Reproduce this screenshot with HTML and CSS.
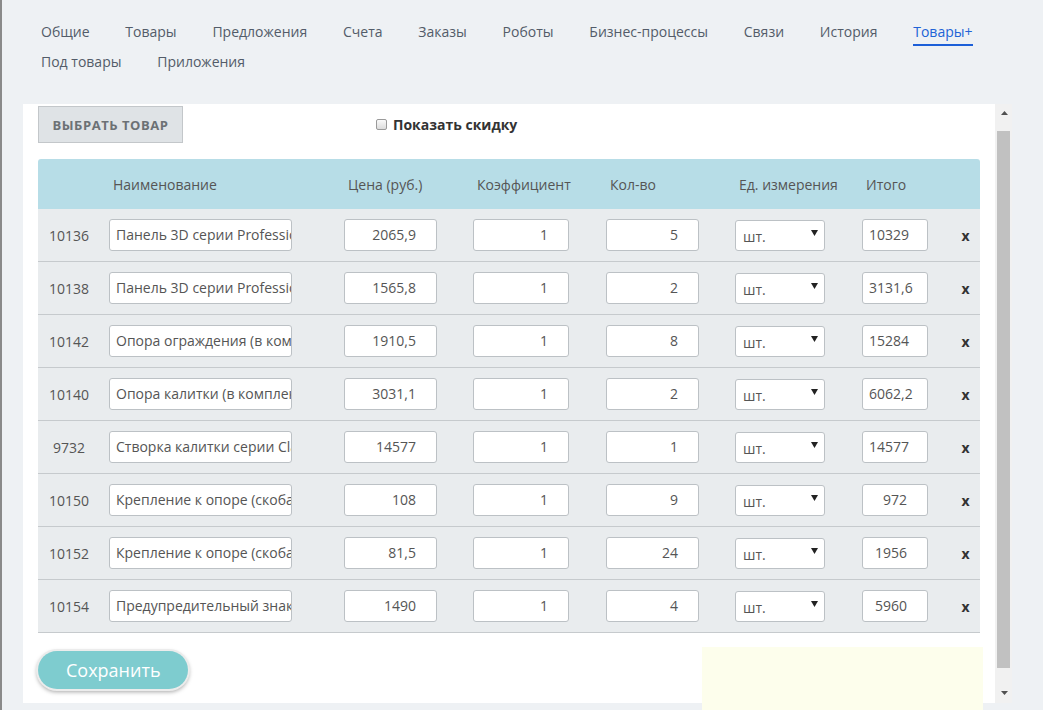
FILE: index.html
```html
<!DOCTYPE html>
<html lang="ru">
<head>
<meta charset="utf-8">
<title>Товары+</title>
<link rel="stylesheet" href="styles.css">
</head>
<body>
<div class="page">
  <nav class="tabs">
    <a class="tab">Общие</a>
    <a class="tab">Товары</a>
    <a class="tab">Предложения</a>
    <a class="tab">Счета</a>
    <a class="tab">Заказы</a>
    <a class="tab">Роботы</a>
    <a class="tab">Бизнес-процессы</a>
    <a class="tab">Связи</a>
    <a class="tab">История</a>
    <a class="tab active">Товары+</a>
    <a class="tab">Под товары</a>
    <a class="tab">Приложения</a>
  </nav>

  <div class="frame">
    <div class="content">
      <div class="toolbar">
        <button class="pick-btn">Выбрать товар</button>
        <label class="discount"><span class="checkbox"></span>Показать скидку</label>
      </div>

      <div class="grid-table">
        <div class="row head">
          <div class="c-id"></div>
          <div class="th">Наименование</div>
          <div class="th">Цена (руб.)</div>
          <div class="th">Коэффициент</div>
          <div class="th">Кол-во</div>
          <div class="th">Ед. измерения</div>
          <div class="th">Итого</div>
          <div></div>
        </div>

        <div class="row">
          <div class="c-id">10136</div>
          <div><div class="field name">Панель 3D серии Professional</div></div>
          <div><div class="field num w-price"><span>2065,9</span></div></div>
          <div><div class="field num w-coef"><span>1</span></div></div>
          <div><div class="field num w-qty"><span>5</span></div></div>
          <div><div class="select">шт.<svg class="arrow" width="7" height="6" viewBox="0 0 7 6"><path d="M0 0H7L3.5 6Z"/></svg></div></div>
          <div><div class="field num w-total"><span>10329</span></div></div>
          <div class="del">x</div>
        </div>

        <div class="row">
          <div class="c-id">10138</div>
          <div><div class="field name">Панель 3D серии Professional</div></div>
          <div><div class="field num w-price"><span>1565,8</span></div></div>
          <div><div class="field num w-coef"><span>1</span></div></div>
          <div><div class="field num w-qty"><span>2</span></div></div>
          <div><div class="select">шт.<svg class="arrow" width="7" height="6" viewBox="0 0 7 6"><path d="M0 0H7L3.5 6Z"/></svg></div></div>
          <div><div class="field num w-total"><span>3131,6</span></div></div>
          <div class="del">x</div>
        </div>

        <div class="row">
          <div class="c-id">10142</div>
          <div><div class="field name">Опора ограждения (в комплекте)</div></div>
          <div><div class="field num w-price"><span>1910,5</span></div></div>
          <div><div class="field num w-coef"><span>1</span></div></div>
          <div><div class="field num w-qty"><span>8</span></div></div>
          <div><div class="select">шт.<svg class="arrow" width="7" height="6" viewBox="0 0 7 6"><path d="M0 0H7L3.5 6Z"/></svg></div></div>
          <div><div class="field num w-total"><span>15284</span></div></div>
          <div class="del">x</div>
        </div>

        <div class="row">
          <div class="c-id">10140</div>
          <div><div class="field name">Опора калитки (в комплекте)</div></div>
          <div><div class="field num w-price"><span>3031,1</span></div></div>
          <div><div class="field num w-coef"><span>1</span></div></div>
          <div><div class="field num w-qty"><span>2</span></div></div>
          <div><div class="select">шт.<svg class="arrow" width="7" height="6" viewBox="0 0 7 6"><path d="M0 0H7L3.5 6Z"/></svg></div></div>
          <div><div class="field num w-total"><span>6062,2</span></div></div>
          <div class="del">x</div>
        </div>

        <div class="row">
          <div class="c-id">9732</div>
          <div><div class="field name">Створка калитки серии Classic</div></div>
          <div><div class="field num w-price"><span>14577</span></div></div>
          <div><div class="field num w-coef"><span>1</span></div></div>
          <div><div class="field num w-qty"><span>1</span></div></div>
          <div><div class="select">шт.<svg class="arrow" width="7" height="6" viewBox="0 0 7 6"><path d="M0 0H7L3.5 6Z"/></svg></div></div>
          <div><div class="field num w-total"><span>14577</span></div></div>
          <div class="del">x</div>
        </div>

        <div class="row">
          <div class="c-id">10150</div>
          <div><div class="field name">Крепление к опоре (скоба)</div></div>
          <div><div class="field num w-price"><span>108</span></div></div>
          <div><div class="field num w-coef"><span>1</span></div></div>
          <div><div class="field num w-qty"><span>9</span></div></div>
          <div><div class="select">шт.<svg class="arrow" width="7" height="6" viewBox="0 0 7 6"><path d="M0 0H7L3.5 6Z"/></svg></div></div>
          <div><div class="field num w-total"><span>972</span></div></div>
          <div class="del">x</div>
        </div>

        <div class="row">
          <div class="c-id">10152</div>
          <div><div class="field name">Крепление к опоре (скоба)</div></div>
          <div><div class="field num w-price"><span>81,5</span></div></div>
          <div><div class="field num w-coef"><span>1</span></div></div>
          <div><div class="field num w-qty"><span>24</span></div></div>
          <div><div class="select">шт.<svg class="arrow" width="7" height="6" viewBox="0 0 7 6"><path d="M0 0H7L3.5 6Z"/></svg></div></div>
          <div><div class="field num w-total"><span>1956</span></div></div>
          <div class="del">x</div>
        </div>

        <div class="row">
          <div class="c-id">10154</div>
          <div><div class="field name">Предупредительный знак</div></div>
          <div><div class="field num w-price"><span>1490</span></div></div>
          <div><div class="field num w-coef"><span>1</span></div></div>
          <div><div class="field num w-qty"><span>4</span></div></div>
          <div><div class="select">шт.<svg class="arrow" width="7" height="6" viewBox="0 0 7 6"><path d="M0 0H7L3.5 6Z"/></svg></div></div>
          <div><div class="field num w-total"><span>5960</span></div></div>
          <div class="del">x</div>
        </div>
      </div>

      <button class="save-btn">Сохранить</button>
    </div>

    <div class="scrollbar">
      <svg class="sb-arrow" width="7" height="4" viewBox="0 0 7 4"><path d="M0 4H7L3.5 0Z"/></svg>
      <div class="thumb"></div>
      <svg class="sb-arrow down" width="7" height="4" viewBox="0 0 7 4"><path d="M0 0H7L3.5 4Z"/></svg>
    </div>
  </div>

  <div class="note"></div>
</div>
</body>
</html>
```

FILE: styles.css
```css
* { box-sizing: border-box; }

html, body {
  margin: 0;
  padding: 0;
  height: 100%;
  overflow: hidden;
}

body {
  background: #eef1f4;
  font-family: "Open Sans", "Noto Sans", sans-serif;
  font-size: 14px;
  color: #555;
}

.page {
  position: relative;
  height: 710px;
  border-left: 2px solid #8a8a8a;
}

/* Tabs */
.tabs {
  display: flex;
  flex-wrap: wrap;
  column-gap: 35.8px;
  row-gap: 3px;
  padding: 19px 20px 0 39px;
}

.tab {
  display: block;
  height: 27px;
  line-height: 25px;
  border-bottom: 2px solid transparent;
  color: #535c69;
  font-size: 14px;
  white-space: nowrap;
  cursor: pointer;
}

.tab.active {
  color: #2163d6;
  border-bottom-color: #1c5fd8;
}

/* Frame */
.frame {
  display: flex;
  margin: 28px 0 0 21px;
  width: 989px;
  height: 599px;
}

.content {
  flex: 1;
  background: #fff;
  padding: 2px 15px 0 15px;
  overflow: hidden;
}

.toolbar {
  display: flex;
  align-items: center;
  height: 37px;
}

.pick-btn {
  width: 145px;
  height: 37px;
  padding: 0;
  background: #dfe3e6;
  border: 1px solid #c3c7ca;
  border-radius: 0;
  color: #6c7175;
  font-family: "Open Sans", "Noto Sans", sans-serif;
  font-size: 13px;
  font-weight: 700;
  text-transform: uppercase;
  letter-spacing: 0.55px;
}

.discount {
  display: flex;
  align-items: center;
  margin-left: 193px;
  font-weight: 700;
  color: #333;
  font-size: 14px;
}

.checkbox {
  display: inline-block;
  width: 11px;
  height: 11px;
  margin-right: 6px;
  border: 1px solid #9a9a9a;
  border-radius: 2px;
  background: linear-gradient(#fafafa, #dcdcdc);
}

/* Table */
.grid-table {
  margin-top: 16px;
  width: 942px;
}

.row {
  display: grid;
  grid-template-columns: 71px 235px 129px 133px 129px 127px 89px 29px;
  align-items: center;
  height: 53px;
  background: #e9ecee;
  border-bottom: 1px solid #c6cacd;
}

.row.head {
  height: 50px;
  background: #b7dde7;
  border-bottom: none;
  border-radius: 3px 3px 0 0;
  color: #555;
}

.th {
  padding-left: 4px;
  white-space: nowrap;
}

.c-id {
  width: 62px;
  text-align: center;
  color: #555;
}

.field {
  height: 32px;
  line-height: 30px;
  border: 1px solid #bcc1c5;
  border-radius: 3px;
  background: #fff;
  color: #555;
  white-space: nowrap;
  overflow: hidden;
}

.field.name {
  width: 183px;
  padding: 0 6px;
}

.field.num {
  display: flex;
  padding: 0 20px 0 6px;
}

.field.num span {
  margin-left: auto;
}

.w-price { width: 93px; }
.w-coef { width: 96px; }
.w-qty { width: 93px; }
.w-total { width: 66px; }

.select {
  position: relative;
  width: 90px;
  height: 31px;
  line-height: 31px;
  border: 1px solid #bcc1c5;
  border-radius: 3px;
  background: #fff;
  padding-left: 7px;
  color: #555;
}

.arrow {
  position: absolute;
  right: 6px;
  top: 9px;
  fill: #222;
}

.del {
  text-align: center;
  font-weight: 700;
  color: #333;
  font-size: 14px;
}

/* Save */
.save-btn {
  display: block;
  margin-top: 18px;
  width: 150px;
  height: 38px;
  border: none;
  border-radius: 19px;
  background: #7ecccf;
  color: #fff;
  font-family: "Open Sans", "Noto Sans", sans-serif;
  font-size: 18px;
  text-align: left;
  padding: 0 0 0 28px;
  box-shadow: 0 0 0 2px #ececec, 0 2px 4px 1px rgba(0, 0, 0, 0.35);
}

/* Scrollbar */
.scrollbar {
  width: 17px;
  background: #f1f1f1;
  display: flex;
  flex-direction: column;
  align-items: center;
  padding-top: 7px;
}

.sb-arrow {
  fill: #505050;
  margin-left: 1px;
}

.thumb {
  width: 13px;
  height: 537px;
  margin-top: 16px;
  background: #c1c1c1;
}

.sb-arrow.down {
  margin-top: 23px;
}

/* Floating note */
.note {
  position: absolute;
  left: 700px;
  top: 647px;
  width: 281px;
  height: 63px;
  background: #fdfeec;
}
```
